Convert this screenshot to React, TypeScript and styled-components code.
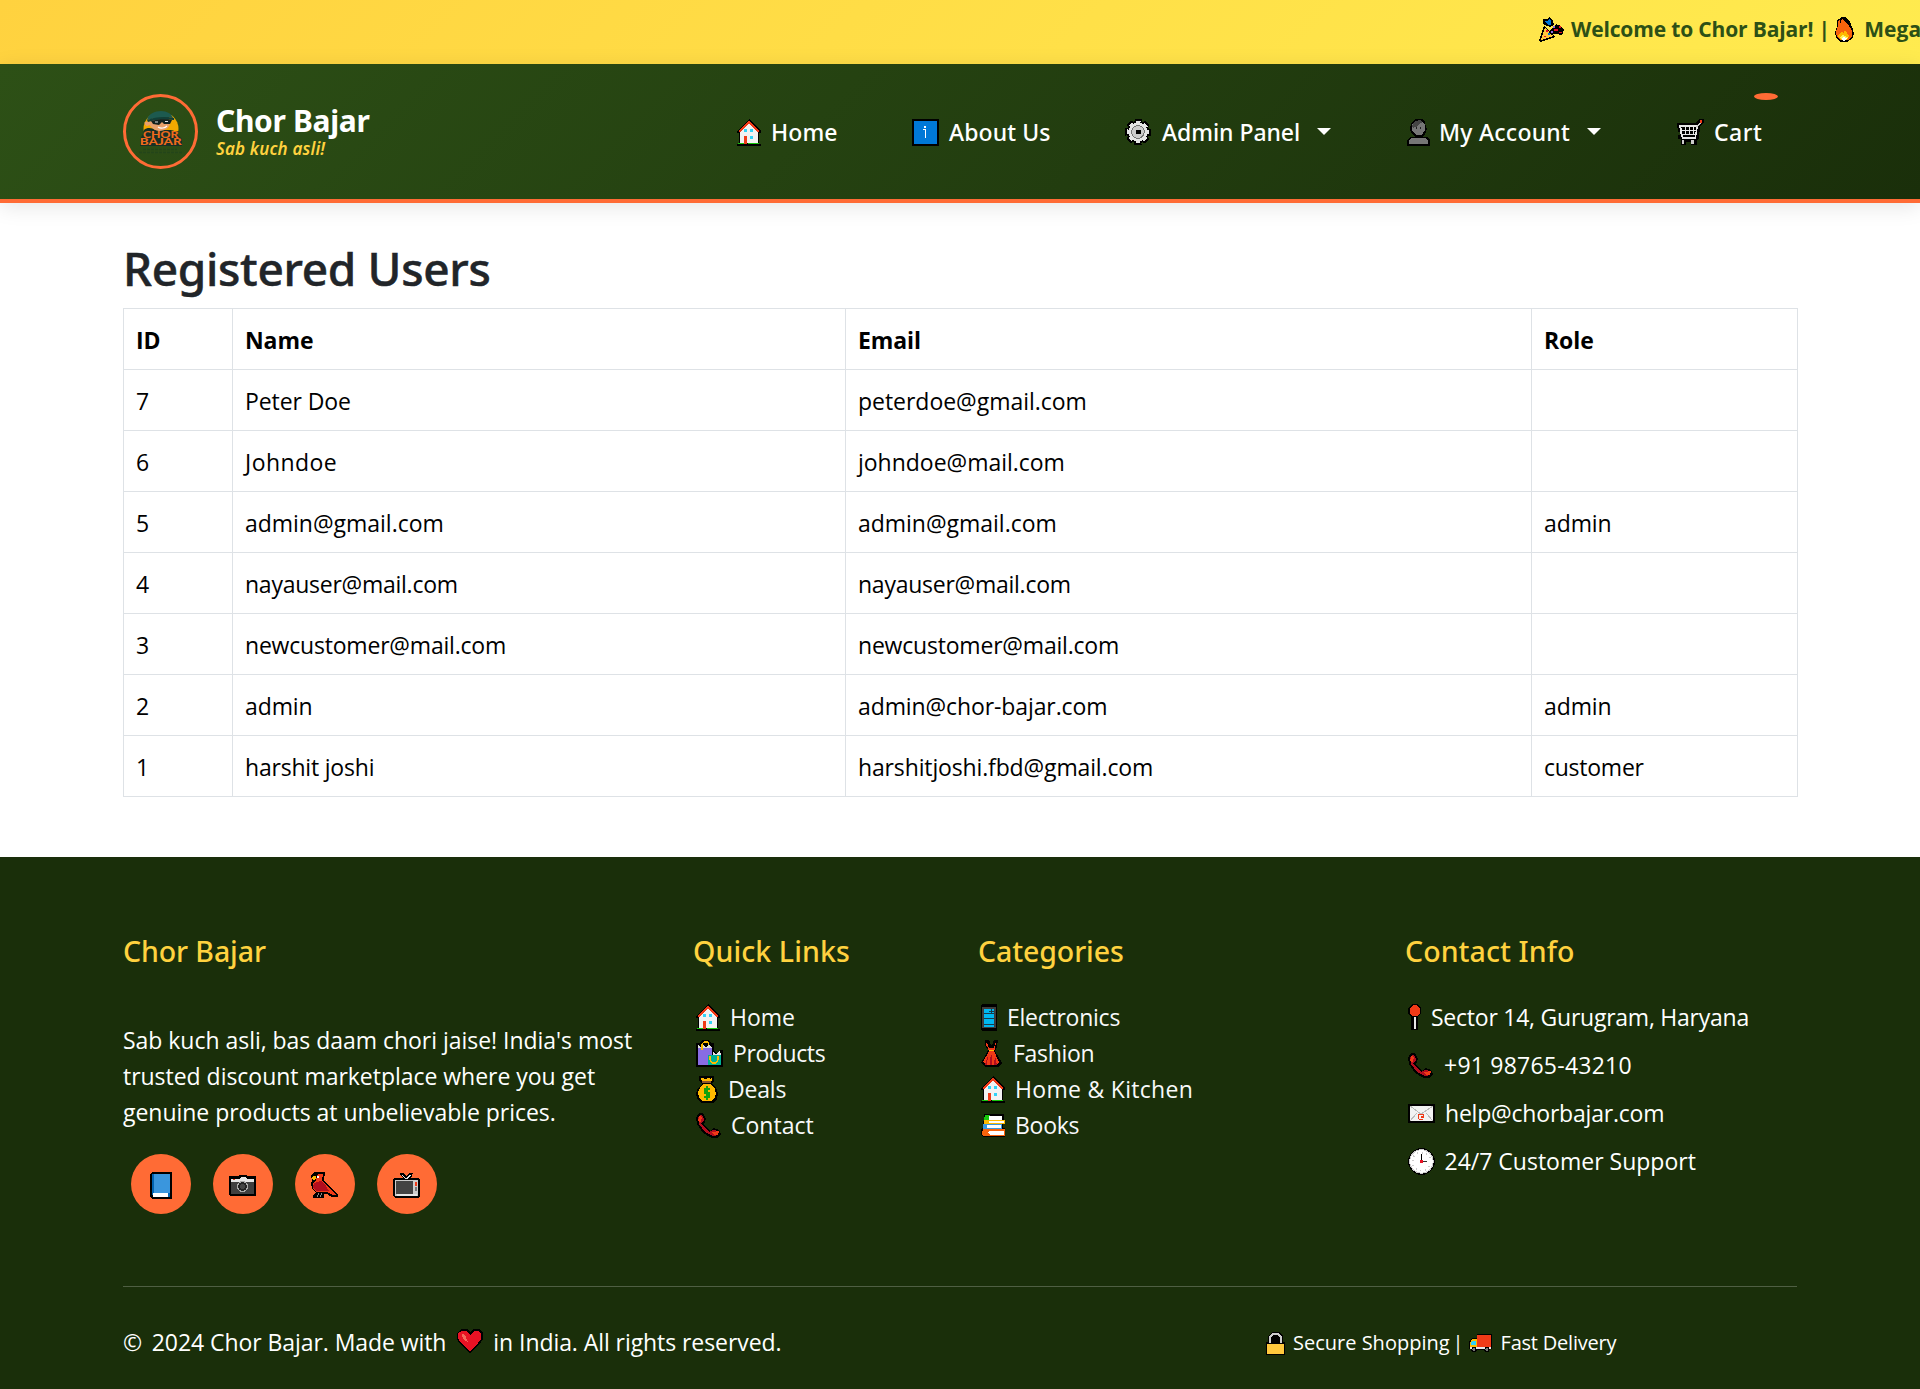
import React from 'react';
import styled, { createGlobalStyle } from 'styled-components';

const GlobalStyle = createGlobalStyle`
  *, *::before, *::after { box-sizing: border-box; }
  body {
    margin: 0;
    background: #fff;
    color: #000;
    font-family: "Open Sans", "Noto Sans", sans-serif;
    font-size: 23px;
    line-height: 36px;
  }
  a { color: inherit; text-decoration: none; }
`;

const colors = { orange: '#ff6b35', yellow: '#ffd23f', green: '#2d5016', dark: '#1a2f0a' };

/* ---------- icons ---------- */

type IconName =
  | 'house' | 'info' | 'gear' | 'person' | 'cart' | 'popper' | 'fire' | 'bags' | 'money' | 'phone'
  | 'mobile' | 'dress' | 'books' | 'pin' | 'mail' | 'clock' | 'book' | 'camera' | 'bird' | 'tv'
  | 'heart' | 'lock' | 'truck';

const icons: Record<IconName, { w: number; h: number; art: React.ReactNode }> = {
  house: { w: 24, h: 27, art: <>
    <path d="M12 0 24 12V14H22V25H24V27H0V25H2V14H0V12Z" fill="#000" />
    <path d="M12 4 21 13V24H3V13Z" fill="#f2f2f2" />
    <path d="M2 13 12 3 22 13" fill="none" stroke="#f03a17" strokeWidth="1.8" />
    <path d="M7 10h3v3H7zM13 10h3v3h-3zM13 17h3v3h-3z" fill="#31d2f7" />
    <path d="M7 17h3v8H7z" fill="#f03a17" />
    <path d="M1 24h6v1H1zM11 24h11v1H11z" fill="#16c60c" />
  </> },
  info: { w: 27, h: 27, art: <>
    <path d="M0 0h27v27H0z" fill="#000" />
    <path d="M2 2h23v23H2z" fill="#0078d7" />
    <path d="M12 7h2v2h-2zM11 10h3v1h-3zM13 10h1v9h-1z" fill="#fff" />
  </> },
  gear: { w: 26, h: 26, art: <>
    <circle cx="13" cy="13" r="11.2" fill="#000" />
    <circle cx="13" cy="13" r="11" fill="none" stroke="#000" strokeWidth="4.4" strokeDasharray="6.6 2.04" strokeDashoffset="3.3" />
    <circle cx="13" cy="13" r="9.6" fill="#e6e6e6" />
    <circle cx="13" cy="13" r="9.8" fill="none" stroke="#e6e6e6" strokeWidth="3" strokeDasharray="4.3 3.4" strokeDashoffset="2.1" />
    <circle cx="13" cy="13" r="6.3" fill="#ccc" stroke="#767676" strokeWidth="1" />
    <path d="M11 11h5v4h-5z" fill="#000" />
  </> },
  person: { w: 23, h: 27, art: <>
    <path d="M8 0h7l3 3 1 5 1 2-2 5-3 3h5l3 3v6H0v-6l3-3h5l-4-4-1-4 1-6Z" fill="#000" />
    <path d="M8 2h7l3 4v5l-3 5H9l-4-5V6Z" fill="#767676" />
    <path d="M5 7 8 2l5-1 3 2-3 1-2 3-5 2Z" fill="#454545" />
    <path d="M9 8h1v2H9zM13 8h1v2h-1z" fill="#222" />
    <path d="M4 19h15l2 3v3H2v-3Z" fill="#767676" />
  </> },
  cart: { w: 27, h: 26, art: <>
    <path d="M0 4h19l3-4h5v4l-4 3-1 12-2 2v5h-6v-3H9v3H4v-6H1v-4h2v-3H1Z" fill="#000" />
    <path d="M2 6h18v2H2zM3 11h16v1H3zM4 15h15v1H4zM5 18h14v2H5z" fill="#e6e6e6" />
    <path d="M2 6h2l2 12H4zM8 8h1v8H8zM12 8h1v8h-1zM16 8h1v8h-1zM19 7h2l-2 12h-1z" fill="#e6e6e6" />
    <path d="M20 8 24 3" stroke="#ccc" strokeWidth="1.5" />
    <path d="M23 1h2v3h-2z" fill="#f03a17" />
    <path d="M5 21h2v4H5zM14 21h3v4h-3z" fill="#ccc" />
  </> },
  popper: { w: 25, h: 25, art: <>
    <path d="M5 9 17 20 1 25 0 23Z" fill="#000" />
    <path d="M6 11 14 19 2 23Z" fill="#ffc83d" />
    <path d="M4 2h5l1-2 4 3 1 5-4 2-6-2-1-3Z" fill="#000" />
    <path d="M6 4h2l2-2 2 2v4H9Z" fill="#0078d7" />
    <path d="M13 11 17 7l5 2 3 4-2 5-7-1-4 1-2-3Z" fill="#000" />
    <path d="M15 12h4v2h-4zM20 9h2v2h-2zM20 15h3v1h-3z" fill="#e81224" />
    <path d="M14 9h2v2h-2zM12 14h2v2h-2z" fill="#886ce4" />
    <path d="M7 13h2v2H7zM5 19h2v1H5z" fill="#e81224" />
    <path d="M9 16h2v2H9z" fill="#0078d7" />
  </> },
  fire: { w: 19, h: 25, art: <>
    <path d="M6 0h4l5 5 3 7 1 5-2 5-5 3H6l-4-3-2-6 2-7V3l2-1Z" fill="#000" />
    <path d="M7 2 13 7l4 7v5l-3 4H5l-3-3-1-5 2-6V4l2-1v4Z" fill="#f7630c" />
    <path d="M3 19 6 15l3 1 1-3 4 6-2 4H6Z" fill="#ffb900" />
    <path d="m8 17 1 2 4 1-2 3H7l-2-3Z" fill="#fff35c" />
    <path d="M8 20h2v1h2l-2 3H8l-1-2Z" fill="#fff" />
  </> },
  bags: { w: 27, h: 27, art: <>
    <path d="M0 3h4l2-3h6l3 3h3v8l3 3 3-4h3v17H0Z" fill="#000" />
    <path d="M2 7h14v8h-4v10H2z" fill="#886ce4" />
    <path d="m2 4 2 3 3-2 3 2 3-3 2 3h1v1H2z" fill="#ddd" />
    <path d="M6 10V4l2-2h4l1 3" fill="none" stroke="#ffb900" strokeWidth="1.2" />
    <path d="M12 15h13v10H12z" fill="#00b294" />
    <path d="m17 12 3 2 4-3 1 4h-8z" fill="#e6e6e6" />
    <path d="M14 16v4l2 3h4l2-3v-4" fill="none" stroke="#ffb900" strokeWidth="1.2" />
  </> },
  money: { w: 22, h: 27, art: <>
    <path d="M3 0h15v5l-2 3 4 4 2 5-1 6-4 4H5l-4-4-1-6 2-5 4-4-3-4Z" fill="#000" />
    <path d="M5 2h2l1 1h2l1-1h2l1 1 2-1v2l-2 2H6Z" fill="#ffb900" />
    <path d="M6 5h9v2H6z" fill="#8e562e" />
    <path d="M7 8h8l4 5 1 5-2 5-3 2H7l-4-3-1-6 2-4Z" fill="#ffb900" />
    <path d="M14 13H9v4h4v4H8M11 10v14" fill="none" stroke="#13a10e" strokeWidth="1.4" />
  </> },
  phone: { w: 25, h: 25, art: <>
    <path d="M3 0h4l3 6-2 5 6 7 3-3 6 2 2 4-3 4h-6l-9-5-6-9-1-6Z" fill="#000" />
    <path d="m4 2 3 1 1 4-3 3 8 9 4-2 6 1-1 4-5 1-8-4-6-8-1-6Z" fill="#b20d1e" />
    <path d="m4 2 2 3-2 5-2-3ZM16 19l7-1-1 4h-4Z" fill="#f03a17" />
  </> },
  mobile: { w: 16, h: 27, art: <>
    <path d="M1 0h14l1 1v25l-1 1H1l-1-1V1Z" fill="#000" />
    <path d="M1 3h14v21H1z" fill="#3d3d3d" />
    <path d="M3 5h10v18H3z" fill="#00b7f1" />
    <path d="M3 9h10v1H3zM3 14h10v1H3zM3 20h10v1H3zM10 5h1v4h-1zM8 7h5v1H8z" fill="#173c4b" />
  </> },
  dress: { w: 21, h: 27, art: <>
    <path d="M4 0h4l2 5h1l2-5h4l-1 7-2 4 3 5 4 7-4 4H5l-5-4 4-7 3-6-3-5Z" fill="#000" />
    <path d="m6 2 2 6h5l2-6-1 7-1 2 5 11-3 3H5l-3-3L8 11 7 8 5 5Z" fill="#f03a17" />
    <path d="M8 10h5v1H8z" fill="#ffb900" />
    <path d="m7 16-1 9H4l2-7ZM11 14v11H9v-7ZM14 16l2 9h-3z" fill="#b20d1e" />
  </> },
  books: { w: 24, h: 23, art: <>
    <path d="M3 0h20v6h1v4h-2v4h2v9H2l-2-3v-5l2-1V9l1-3Z" fill="#000" />
    <path d="M4 1h5v5H3z" fill="#16c60c" /><path d="M8 2h13v4H8z" fill="#fff" />
    <path d="M3 6h21v4H3z" fill="#ffb900" /><path d="M8 7h15v2H8z" fill="#fff" />
    <path d="M2 10h19v5H2z" fill="#3a96dd" /><path d="M6 11h14v3H6z" fill="#fff" />
    <path d="M2 15h22v7H2l-1-3Z" fill="#f7630c" /><path d="M8 17h15v4H9l-2-2Z" fill="#fff" />
  </> },
  pin: { w: 13, h: 27, art: <>
    <path d="M4 0h5l4 4v5l-3 4v13H3V13L0 9V4Z" fill="#000" />
    <path d="M5 1h4l3 4v4l-3 3H4L2 9V4Z" fill="#f03a17" />
    <path d="M6 13h2v12H6z" fill="#e6e6e6" />
  </> },
  mail: { w: 27, h: 19, art: <>
    <path d="M0 0h27v19H0z" fill="#000" />
    <path d="M2 2h23v15H2z" fill="#f2f2f2" />
    <path d="m2 2 11 8L25 2M2 17l7-8M25 17l-7-8" fill="none" stroke="#bbb" strokeWidth="1" />
    <path d="M15 15h-4l-1-2 1-3h4l1 3-3 1v-2h2" fill="none" stroke="#f03a17" strokeWidth="1" />
  </> },
  clock: { w: 27, h: 27, art: <>
    <circle cx="13.5" cy="13.5" r="13.4" fill="#000" />
    <circle cx="13.5" cy="13.5" r="11.7" fill="#fff" stroke="#ccc" strokeWidth="1" />
    <circle cx="13.5" cy="13.5" r="9" fill="none" stroke="#ccc" strokeWidth="2" strokeDasharray="1 3.71" />
    <path d="M13 6h1v8h-1z" fill="#000" /><path d="M13 13h6v1h-6z" fill="#333" />
    <path d="M12 12h3v3h-3z" fill="#e81224" />
  </> },
  book: { w: 22, h: 27, art: <>
    <path d="M2 0h20v27H2l-2-2V2Z" fill="#000" />
    <path d="M2 2h2v21H2z" fill="#0063b1" />
    <path d="M4 2h16v19H4z" fill="#3a96dd" />
    <path d="M3 21h15v4H3z" fill="#fff" /><path d="M18 21h2v4h-2z" fill="#0063b1" />
  </> },
  camera: { w: 27, h: 21, art: <>
    <path d="M0 1h9l2-1h6l2 1h8v19l-1 1H1l-1-1Z" fill="#000" />
    <path d="M2 4h8l2-2h4l2 2h7v3H2z" fill="#e6e6e6" />
    <path d="M2 7h23v12H2z" fill="#3f3f3f" />
    <path d="M4 4h2v1H4z" fill="#f03a17" />
    <circle cx="13.5" cy="11.5" r="5" fill="#222" stroke="#aaa" strokeWidth="1.2" />
    <circle cx="13.5" cy="11.5" r="2.4" fill="#444" />
  </> },
  bird: { w: 27, h: 27, art: <>
    <path d="M6 0h8v3l-1 2v3l5 6 9 9v2h-6l-5-3h-3v4H2v-3l3-3-3-2-2-5 1-5-1-5 3-3Z" fill="#000" />
    <path d="M7 2h5l-1 6 5 6 9 9h-3l-6-3H6l-4-3v-5l3-4Z" fill="#f03a17" />
    <path d="m3 11 7-2 5 5 3 5H5l-3-4Z" fill="#b20d1e" />
    <path d="M2 4h3v2l-2 2-2-1Z" fill="#ffb900" /><path d="M6 4h2v2H6z" fill="#fff" />
    <path d="M8 21 6 25M11 21l-2 4" stroke="#888" strokeWidth="1" />
  </> },
  tv: { w: 27, h: 25, art: <>
    <path d="M7 0h3l3 3 4-3h3l-1 3-2 2h9l1 2v16l-2 2H2l-2-2V6l2-1h9L7 2Z" fill="#000" />
    <path d="m9 2 4 4 5-4" fill="none" stroke="#e6e6e6" strokeWidth="1.2" />
    <path d="M2 7h23v16H2z" fill="#ccc" />
    <path d="M3 8h17v13H3z" fill="#444" />
    <path d="M22 9h2v4h-2z" fill="#f03a17" /><path d="M22 14h2v4h-2z" fill="#767676" />
    <path d="M4 21h20v2H4z" fill="#e6e6e6" />
  </> },
  heart: { w: 26, h: 24, art: <>
    <path d="M4 0h6l3 3 3-3h6l4 4v6l-3 5-10 9L3 15 0 10V4Z" fill="#000" />
    <path d="M5 2h4l4 4 4-4h5l2 3v5l-3 4-8 8-9-8-3-5V4Z" fill="#e81224" />
    <path d="m5 5 3 1 3 7-3-1-3-5Z" fill="#f4695c" />
  </> },
  lock: { w: 19, h: 23, art: <>
    <path d="M6 0h7l4 4v6h2v13H0V10h2V4Z" fill="#000" />
    <path d="M4 11V5l3-3h5l3 3v6" fill="none" stroke="#ccc" strokeWidth="1.6" />
    <path d="M1 12h17v10H1z" fill="#ffc83d" />
  </> },
  truck: { w: 23, h: 18, art: <>
    <path d="M8 0h15v15h-2l-1 3h-4l-1-2H8l-1 2H3l-1-3H0V8l3-4h5Z" fill="#000" />
    <path d="M8 1h14v12H8z" fill="#f03a17" />
    <path d="M3 5h5v8H1V9Z" fill="#ffb900" /><path d="M3 7h4v4H2V9Z" fill="#31d2f7" />
    <path d="M1 13h21v2H1z" fill="#e6e6e6" />
    <circle cx="5" cy="15.5" r="2" fill="#767676" stroke="#000" /><circle cx="18" cy="15.5" r="2" fill="#767676" stroke="#000" />
  </> },
};

const IconSlot = styled.span<{ $slot?: number }>`
  display: flex;
  flex: none;
  width: ${p => (p.$slot ? `${p.$slot}px` : 'auto')};
  svg { display: block; shape-rendering: crispEdges; }
`;

function Icon({ name, slot }: { name: IconName; slot?: number }) {
  const { w, h, art } = icons[name];
  return (
    <IconSlot $slot={slot} aria-hidden="true">
      <svg width={w} height={h} viewBox={`0 0 ${w} ${h}`}>{art}</svg>
    </IconSlot>
  );
}

const Label = styled.span<{ $track?: number }>`
  white-space: nowrap;
  letter-spacing: ${p => p.$track ?? 0}px;
`;

/* ---------- announcement bar ---------- */

const Announcement = styled.div`
  height: 64px;
  padding: 12px 0 0 1539px;
  overflow: hidden;
  background: linear-gradient(135deg, ${colors.yellow} 0%, #ffeb4f 100%);
  color: ${colors.green};
  font-size: 21px;
  font-weight: 700;
`;
const Ticker = styled.div`
  display: flex;
  align-items: center;
  height: 34px;
  white-space: nowrap;
`;

/* ---------- navbar ---------- */

const Navbar = styled.header`
  position: relative;
  height: 139px;
  padding: 0 123px;
  display: flex;
  align-items: center;
  justify-content: space-between;
  background: linear-gradient(135deg, ${colors.green} 0%, ${colors.dark} 100%);
  border-bottom: 4px solid ${colors.orange};
  box-shadow: 0 4px 20px rgba(0, 0, 0, 0.1);
  color: #fff;
`;
const Brand = styled.a`
  display: flex;
  align-items: center;
`;
const LogoRing = styled.span`
  display: flex;
  align-items: center;
  justify-content: center;
  width: 75px;
  height: 75px;
  margin-right: 18px;
  border: 3px solid ${colors.orange};
  border-radius: 50%;
`;
const BrandText = styled.span`
  display: flex;
  flex-direction: column;
  padding-top: 1px;
`;
const BrandName = styled.span`
  font: 700 30px/34px "Noto Sans", sans-serif;
  letter-spacing: -0.35px;
`;
const Tagline = styled.span`
  font: italic 600 17px/22px "Noto Sans", sans-serif;
  letter-spacing: 0.15px;
  color: ${colors.yellow};
`;
const NavList = styled.nav`
  display: flex;
  width: 1060px;
  padding-top: 1px;
  font-family: "Noto Sans", sans-serif;
  font-weight: 500;
`;
const NavLink = styled.a<{ $width: number }>`
  position: relative;
  display: flex;
  align-items: center;
  width: ${p => p.$width}px;
  height: 36px;
`;
const Caret = styled.span`
  margin: -2px 0 0 17px;
  border: 7px solid transparent;
  border-top-color: #fff;
  border-bottom: 0;
`;
const CartBadge = styled.span`
  position: absolute;
  top: -21px;
  left: 77px;
  width: 24px;
  height: 7px;
  border-radius: 50%;
  background: ${colors.orange};
`;

function Logo() {
  return (
    <svg width="44" height="44" viewBox="0 0 44 44" aria-label="Chor Bajar">
      <circle cx="22" cy="19" r="17.5" fill="#f2a900" />
      <path d="M0 0H44V5H0Z" fill="#2c4c16" />
      <circle cx="22" cy="8" r="8" fill="#2c4c16" />
      <path d="M4 21H41V44H3Z" fill="#2c4c16" />
      <path d="M5 20C8 17 14 18 16 20L30 20C34 20 37 21 38 24L43 29V36H1V29L4 24Z" fill="#173025" />
      <path d="M10 9C9 15 13 20 20 21C27 21 32 17 31 10Z" fill="#e9a06c" />
      <path d="M7 12C5 11 5 15 8 16L11 15 11 11Z" fill="#e9a06c" />
      <path d="M8 10C9 4 16 1 22 1C28 1 33 4 34 8C28 7 18 7 8 10Z" fill="#1d5a4f" />
      <path d="M8 10C16 7 26 6 35 8V10C26 9 17 9 9 12Z" fill="#123f37" />
      <path d="M12 11C19 9 27 9 33 10L31 14 25 14 23 12 20 15 14 14Z" fill="#13201f" />
      <path d="M16 12h3M26 11.5h3" stroke="#ddd" strokeWidth="1.2" />
      <path d="M19 17C22 19 26 18 28 16" stroke="#fff" strokeWidth="1.2" fill="none" />
      <g fontFamily="Lato, sans-serif" fontWeight="900" fontSize="8.4" fill="#ee6a1c">
        <text x="4" y="27.8" textLength="35.5" lengthAdjust="spacingAndGlyphs">CHOR</text>
        <text x="0.8" y="35.2" textLength="42" lengthAdjust="spacingAndGlyphs">BAJAR</text>
      </g>
      <path d="M4 39.5H38M0 42.5H43" stroke="#234519" strokeWidth="1.4" strokeDasharray="3 1" />
    </svg>
  );
}

/* ---------- users table ---------- */

const Main = styled.main`
  padding: 36px 123px 60px;
`;
const PageTitle = styled.h2`
  margin: 0;
  height: 69px;
  font: 500 46px/58px "Noto Sans", sans-serif;
  letter-spacing: -0.33px;
  color: #212529;
  -webkit-text-stroke: 0.5px #212529;
`;
const Table = styled.table`
  width: 1674px;
  table-layout: fixed;
  border-collapse: collapse;
`;
const Column = styled.col<{ $width: number }>`
  width: ${p => p.$width}px;
`;
const Cell = styled.td<{ $track?: number }>`
  height: 61px;
  padding: 13px 12px 11px;
  border: 1px solid #dee2e6;
  text-align: left;
  letter-spacing: ${p => p.$track ?? -0.1}px;
`;
const HeadCell = styled(Cell).attrs({ as: 'th' })`
  font-weight: 700;
`;

const users: [string, string, string, string][] = [
  ['7', 'Peter Doe', 'peterdoe@gmail.com', ''],
  ['6', 'Johndoe', 'johndoe@mail.com', ''],
  ['5', 'admin@gmail.com', 'admin@gmail.com', 'admin'],
  ['4', 'nayauser@mail.com', 'nayauser@mail.com', ''],
  ['3', 'newcustomer@mail.com', 'newcustomer@mail.com', ''],
  ['2', 'admin', 'admin@chor-bajar.com', 'admin'],
  ['1', 'harshit joshi', 'harshitjoshi.fbd@gmail.com', 'customer'],
];

const cellTracking: Record<string, number> = {
  Johndoe: 0.45,
  'peterdoe@gmail.com': -0.03,
  'johndoe@mail.com': -0.02,
  'admin@gmail.com': -0.02,
  'nayauser@mail.com': -0.25,
  'newcustomer@mail.com': -0.2,
  'harshit joshi': -0.2,
  'harshitjoshi.fbd@gmail.com': -0.14,
  customer: -0.25,
};

/* ---------- footer ---------- */

const Footer = styled.footer`
  height: 532px;
  padding: 76px 123px 0;
  background: ${colors.dark};
  color: #fff;
`;
const FooterGrid = styled.div`
  display: grid;
  grid-template-columns: 570px 285px 427px 1fr;
  height: 353px;
`;
const FooterTitle = styled.h5<{ $track?: number }>`
  margin: 0 0 30px;
  font: 500 28.5px/36px "Noto Sans", sans-serif;
  letter-spacing: ${p => p.$track ?? -0.1}px;
  color: ${colors.yellow};
`;
const About = styled.p`
  width: 534px;
  margin: 53px 0 24px;
  letter-spacing: -0.03px;
`;
const Socials = styled.div`
  display: flex;
  gap: 22px;
  padding-left: 8px;
`;
const SocialLink = styled.a`
  display: flex;
  align-items: center;
  justify-content: center;
  width: 60px;
  height: 60px;
  padding: 3px 1px 0 0;
  border-radius: 50%;
  background: ${colors.orange};
`;
const LinkList = styled.ul<{ $gap?: number }>`
  display: flex;
  flex-direction: column;
  gap: ${p => p.$gap ?? 0}px;
  margin: 0;
  padding: 0 0 0 3px;
  list-style: none;
`;
const LinkItem = styled.li<{ $soft?: boolean }>`
  display: flex;
  align-items: center;
  height: 36px;
  color: ${p => (p.$soft ? '#f8f9fa' : '#fff')};
`;
const FooterBottom = styled.div`
  display: grid;
  grid-template-columns: 1143px 1fr;
  padding-top: 37px;
  border-top: 1px solid #4f5f43;
`;
const Credit = styled.div`
  display: flex;
  align-items: center;
  height: 36px;
`;
const Heart = styled.span`
  margin: -3px 0 0 11px;
`;
const Perks = styled(Credit)`
  padding-top: 2px;
  font-size: 20px;
`;
const Divider = styled.span`
  width: 17px;
  margin-right: 2px;
  text-align: center;
`;

type Entry = { icon: IconName; slot: number; text: string; track?: number };

const nav: (Entry & { width: number; menu?: boolean; badge?: boolean })[] = [
  { icon: 'house', slot: 34, text: 'Home', track: 0.1, width: 175 },
  { icon: 'info', slot: 37, text: 'About Us', track: 0.1, width: 213 },
  { icon: 'gear', slot: 37, text: 'Admin Panel', track: -0.05, width: 282, menu: true },
  { icon: 'person', slot: 32, text: 'My Account', track: 0.25, width: 270, menu: true },
  { icon: 'cart', slot: 37, text: 'Cart', track: 0.5, width: 120, badge: true },
];
const quickLinks: Entry[] = [
  { icon: 'house', slot: 34, text: 'Home' },
  { icon: 'bags', slot: 37, text: 'Products', track: -0.4 },
  { icon: 'money', slot: 32, text: 'Deals', track: -0.2 },
  { icon: 'phone', slot: 35, text: 'Contact' },
];
const categories: Entry[] = [
  { icon: 'mobile', slot: 26, text: 'Electronics', track: -0.25 },
  { icon: 'dress', slot: 32, text: 'Fashion', track: -0.3 },
  { icon: 'house', slot: 34, text: 'Home & Kitchen', track: 0.3 },
  { icon: 'books', slot: 34, text: 'Books', track: -0.25 },
];
const contacts: Entry[] = [
  { icon: 'pin', slot: 23, text: 'Sector 14, Gurugram, Haryana', track: -0.24 },
  { icon: 'phone', slot: 36, text: '+91 98765-43210', track: 0.23 },
  { icon: 'mail', slot: 37, text: 'help@chorbajar.com', track: -0.2 },
  { icon: 'clock', slot: 36.5, text: '24/7 Customer Support' },
];

function Entries({ items, gap, soft }: { items: Entry[]; gap?: number; soft?: boolean }) {
  return (
    <LinkList $gap={gap}>
      {items.map(i => (
        <LinkItem key={i.text} $soft={soft}>
          <Icon name={i.icon} slot={i.slot} />
          <Label $track={i.track}>{i.text}</Label>
        </LinkItem>
      ))}
    </LinkList>
  );
}

export default function App() {
  return (
    <>
      <GlobalStyle />
      <Announcement>
        <Ticker>
          <Icon name="popper" slot={32} />
          <Label $track={-0.15}>Welcome to Chor Bajar! |&nbsp;</Label>
          <Icon name="fire" slot={29} />
          <Label>Mega</Label>
        </Ticker>
      </Announcement>
      <Navbar>
        <Brand href="#">
          <LogoRing><Logo /></LogoRing>
          <BrandText>
            <BrandName>Chor Bajar</BrandName>
            <Tagline>Sab kuch asli!</Tagline>
          </BrandText>
        </Brand>
        <NavList>
          {nav.map(n => (
            <NavLink key={n.text} href="#" $width={n.width}>
              <Icon name={n.icon} slot={n.slot} />
              <Label $track={n.track}>{n.text}</Label>
              {n.menu && <Caret />}
              {n.badge && <CartBadge />}
            </NavLink>
          ))}
        </NavList>
      </Navbar>
      <Main>
        <PageTitle>Registered Users</PageTitle>
        <Table>
          <colgroup>
            <Column $width={109} /><Column $width={613} /><Column $width={686} /><Column $width={266} />
          </colgroup>
          <thead>
            <tr>{['ID', 'Name', 'Email', 'Role'].map(h => <HeadCell key={h}>{h}</HeadCell>)}</tr>
          </thead>
          <tbody>
            {users.map(u => (
              <tr key={u[0]}>{u.map((v, i) => <Cell key={i} $track={cellTracking[v]}>{v}</Cell>)}</tr>
            ))}
          </tbody>
        </Table>
      </Main>
      <Footer>
        <FooterGrid>
          <section>
            <FooterTitle>Chor Bajar</FooterTitle>
            <About>
              Sab kuch asli, bas daam chori jaise! India's most trusted discount marketplace where you get
              genuine products at unbelievable prices.
            </About>
            <Socials>
              {(['book', 'camera', 'bird', 'tv'] as IconName[]).map(s => (
                <SocialLink key={s} href="#"><Icon name={s} /></SocialLink>
              ))}
            </Socials>
          </section>
          <section>
            <FooterTitle $track={0.1}>Quick Links</FooterTitle>
            <Entries items={quickLinks} soft />
          </section>
          <section>
            <FooterTitle>Categories</FooterTitle>
            <Entries items={categories} soft />
          </section>
          <section>
            <FooterTitle $track={0.08}>Contact Info</FooterTitle>
            <Entries items={contacts} gap={12} />
          </section>
        </FooterGrid>
        <FooterBottom>
          <Credit>
            <Label>©</Label>
            <Label $track={-0.07}>&nbsp;&thinsp;2024 Chor Bajar. Made with</Label>
            <Heart><Icon name="heart" slot={36} /></Heart>
            <Label $track={-0.07}>in India. All rights reserved.</Label>
          </Credit>
          <Perks>
            <Icon name="lock" slot={27} />
            <Label>Secure Shopping</Label>
            <Divider>|</Divider>
            <Icon name="truck" slot={32} />
            <Label $track={-0.22}>Fast Delivery</Label>
          </Perks>
        </FooterBottom>
      </Footer>
    </>
  );
}
